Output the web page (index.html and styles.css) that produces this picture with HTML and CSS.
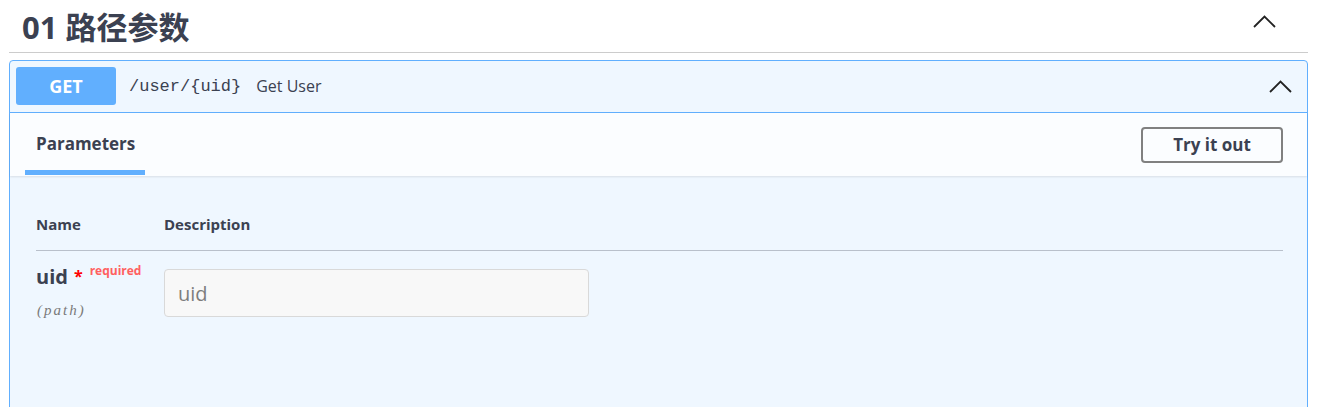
FILE: index.html
```html
<!DOCTYPE html>
<html lang="zh">
<head>
<meta charset="utf-8">
<title>01 路径参数</title>
<link rel="stylesheet" href="styles.css">
</head>
<body>
<div class="wrapper">
  <div class="tag-header">
    <h3 class="tag-title">01 路径参数</h3>
    <span class="chevron chevron-tag">
      <svg width="23" height="13" viewBox="0 0 23 13"><polyline points="1,12 11.5,1.5 22,12" fill="none" stroke="#222" stroke-width="1.8"/></svg>
    </span>
  </div>

  <div class="opblock">
    <div class="summary">
      <span class="method">GET</span>
      <span class="path">/user/{uid}</span>
      <span class="desc">Get User</span>
      <span class="chevron chevron-op">
        <svg width="23" height="13" viewBox="0 0 23 13"><polyline points="1,12 11.5,1.5 22,12" fill="none" stroke="#222" stroke-width="1.8"/></svg>
      </span>
    </div>
    <div class="section-header">
      <div class="tab-item">Parameters</div>
      <button class="try-btn">Try it out</button>
    </div>
    <div class="section-body">
      <div class="params-head">
        <div class="col-name">Name</div>
        <div class="col-desc">Description</div>
      </div>
      <div class="param-row">
        <div class="col-name">
          <div class="param-name">uid<span class="star">*</span><span class="required">required</span></div>
          <div class="param-in">(path)</div>
        </div>
        <div class="col-desc">
          <input class="param-input" type="text" placeholder="uid">
        </div>
      </div>
    </div>
  </div>
</div>
</body>
</html>
```
FILE: styles.css
```css
html, body {
  margin: 0;
  padding: 0;
  background: #ffffff;
}
body {
  font-family: "Open Sans", "Noto Sans CJK SC", sans-serif;
  color: #3b4151;
  height: 407px;
  overflow: hidden;
}
.wrapper {
  padding: 0 11px 0 9px;
}
.tag-header {
  display: flex;
  align-items: center;
  height: 52px;
  border-bottom: 1px solid #cccccc;
}
.tag-title {
  margin: 0;
  padding: 0 0 0 13px;
  font-size: 31px;
  font-weight: 700;
  line-height: 36px;
  flex: 1;
  color: #3b4151;
  font-family: "Open Sans", "Noto Sans CJK SC", sans-serif;
  position: relative;
  top: 1px;
}
.chevron {
  display: flex;
  align-items: center;
}
.chevron-tag {
  margin-right: 32px;
  position: relative;
  top: -5px;
}
.opblock {
  margin-top: 7px;
  border: 1px solid #61affe;
  border-radius: 4px;
  background: #eff7ff;
  height: 360px;
}
.summary {
  display: flex;
  align-items: center;
  padding: 6px 15px 7px 6px;
  border-bottom: 1px solid #61affe;
}
.method {
  display: flex;
  align-items: center;
  justify-content: center;
  width: 100px;
  height: 38px;
  background: #61affe;
  color: #fff;
  border-radius: 3px;
  font-weight: 700;
  font-size: 18px;
}
.path {
  margin-left: 13px;
  font-family: "Liberation Mono", "DejaVu Sans Mono", monospace;
  font-size: 17px;
  color: #3b4151;
}
.desc {
  margin-left: 15px;
  font-size: 16px;
  color: #3b4151;
  flex: 1;
}
.section-header {
  display: flex;
  align-items: center;
  justify-content: space-between;
  height: 63px;
  padding: 0 24px 0 15px;
  background: #fbfdff;
  box-shadow: 0 1px 2px rgba(0, 0, 0, 0.1);
}
.tab-item {
  align-self: stretch;
  display: flex;
  align-items: center;
  padding: 3px 10px 0 11px;
  border-bottom: 5px solid #61affe;
  font-size: 17px;
  font-weight: 700;
  margin-bottom: 1px;
  box-sizing: border-box;
}
.try-btn {
  width: 142px;
  height: 36px;
  border: 2px solid #808080;
  border-radius: 4px;
  background: transparent;
  font-family: "Open Sans", sans-serif;
  font-size: 17px;
  font-weight: 700;
  color: #3b4151;
  padding: 0;
}
.section-body {
  padding: 25px 24px 20px 26px;
}
.params-head {
  display: flex;
  padding: 13px 0 16px;
  border-bottom: 1px solid #b9c0cb;
  font-size: 15px;
  font-weight: 700;
  line-height: 20px;
}
.col-name {
  width: 128px;
  flex: none;
}
.col-desc {
  flex: 1;
}
.param-row {
  display: flex;
  padding-top: 14px;
}
.param-name {
  font-size: 20px;
  font-weight: 700;
  line-height: 24px;
}
.star {
  color: #ff0000;
  font-size: 16px;
  margin-left: 6px;
  position: relative;
  top: -2px;
}
.required {
  color: #ff6060;
  font-size: 12px;
  margin-left: 7px;
  position: relative;
  top: -9px;
}
.param-in {
  margin-top: 10px;
  margin-left: 1px;
  font-family: "Liberation Serif", "DejaVu Serif", serif;
  font-style: italic;
  font-size: 15px;
  letter-spacing: 2px;
  color: #7a7a7a;
}
.param-input {
  margin-top: 4px;
  width: 425px;
  height: 48px;
  box-sizing: border-box;
  border: 1px solid #d9d9d9;
  border-radius: 4px;
  background: #f8f8f8;
  padding: 0 13px;
  font-family: "Open Sans", sans-serif;
  font-size: 20px;
  color: #3b4151;
}
.param-input::placeholder {
  color: #7d7d7d;
}
```
